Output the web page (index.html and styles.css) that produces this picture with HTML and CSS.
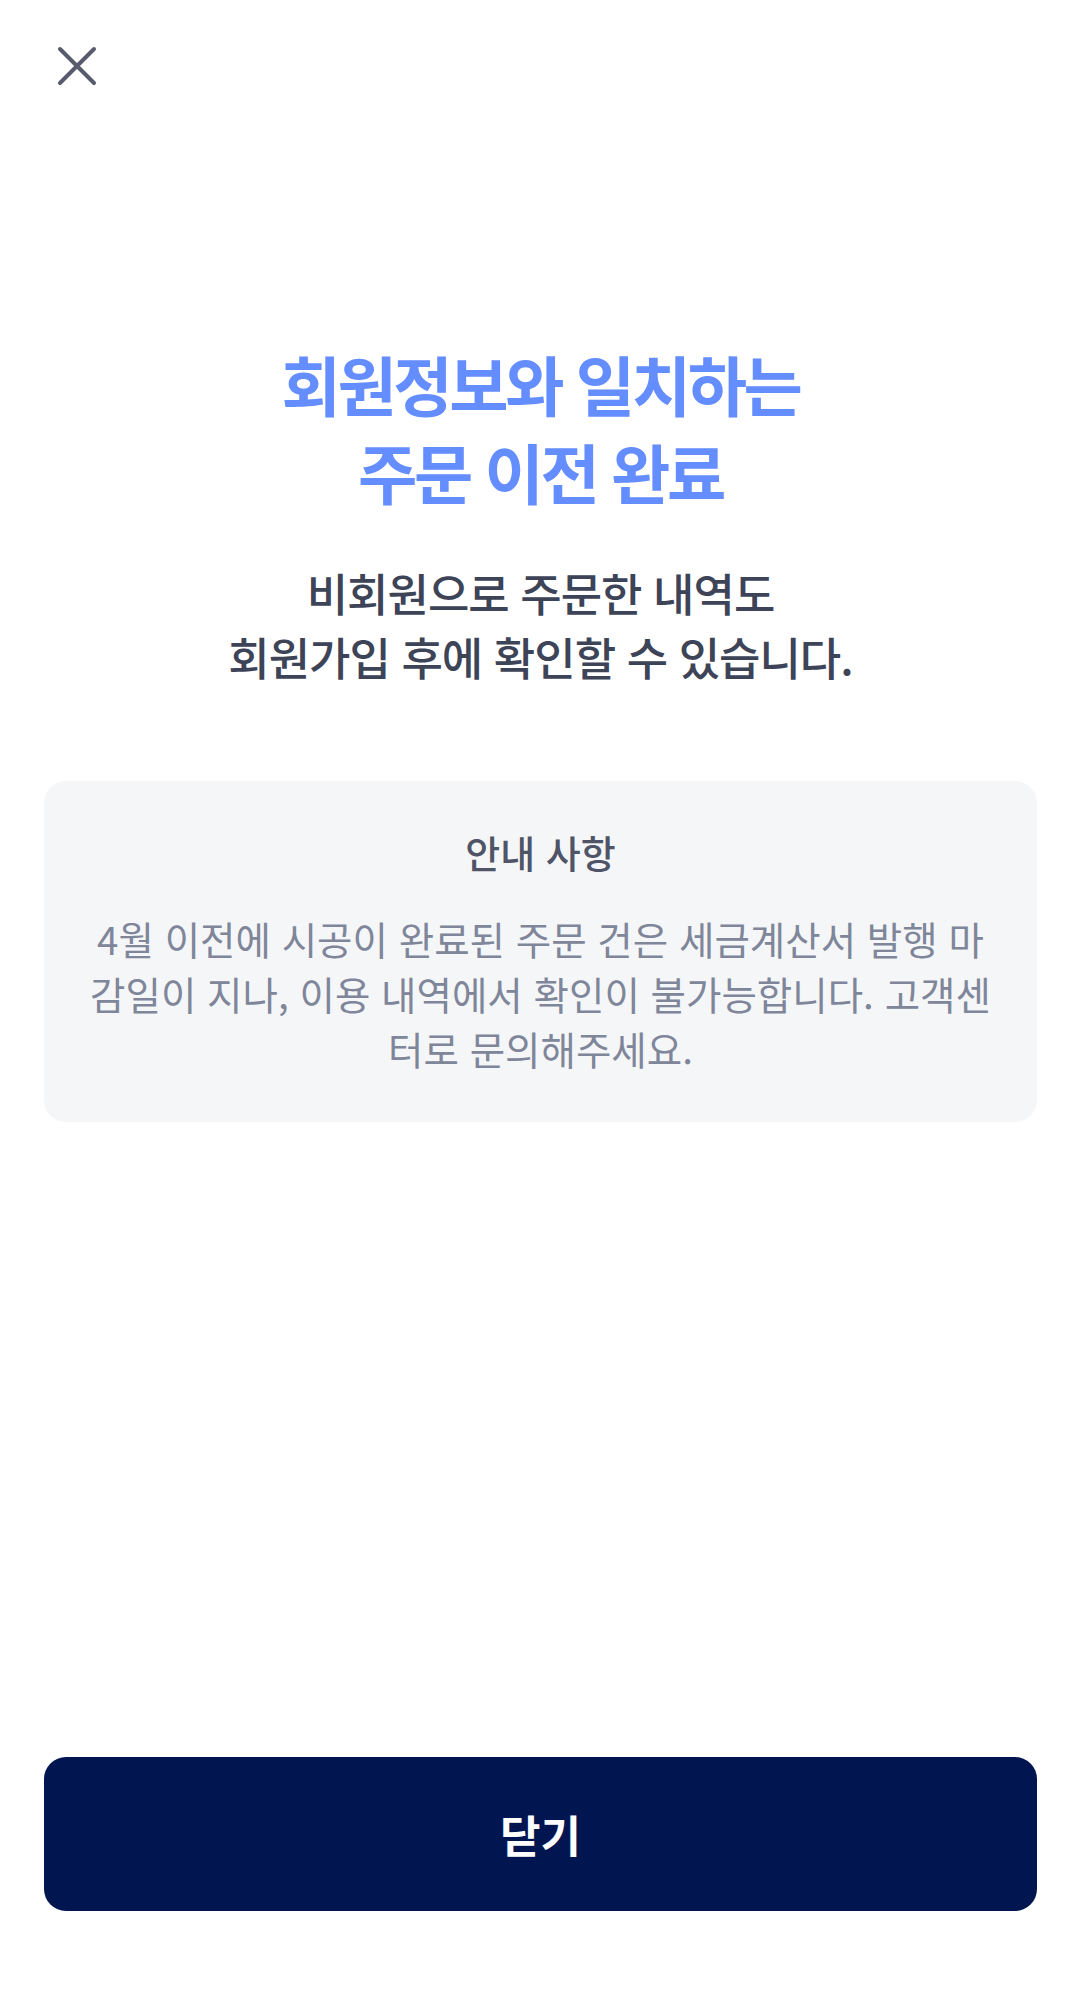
FILE: index.html
```html
<!DOCTYPE html>
<html lang="ko">
<head>
    <meta charset="UTF-8">
    <meta name="viewport" content="width=device-width, initial-scale=1.0">
    <title>주문 이전 완료</title>
    <link rel="stylesheet" href="styles.css">
</head>
<body>

    <div class="page">
        <!-- Close -->
        <header class="top-bar">
            <button class="close-btn" type="button" aria-label="닫기">
                <svg width="40" height="40" viewBox="0 0 40 40" fill="none">
                    <path d="M3 3 L37 37 M37 3 L3 37" stroke="#575b6d" stroke-width="4" stroke-linecap="round"/>
                </svg>
            </button>
        </header>

        <main class="content">
            <h1 class="title">회원정보와 일치하는<br>주문 이전 완료</h1>
            <p class="desc">비회원으로 주문한 내역도<br>회원가입 후에 확인할 수 있습니다.</p>

            <!-- Notice box -->
            <section class="notice">
                <h2 class="notice-title">안내 사항</h2>
                <p class="notice-text">4월 이전에 시공이 완료된 주문 건은 세금계산서 발행 마감일이 지나, 이용 내역에서 확인이 불가능합니다. 고객센터로 문의해주세요.</p>
            </section>
        </main>

        <footer class="bottom">
            <button class="confirm-btn" type="button">닫기</button>
        </footer>
    </div>

</body>
</html>
```

FILE: styles.css
```css
body {
    margin: 0;
    background: #ffffff;
    font-family: "Noto Sans CJK KR", "Noto Sans", sans-serif;
}
.page {
    min-height: 100vh;
    display: flex;
    flex-direction: column;
}
.top-bar {
    padding: 46px 0 0 57px;
}
.close-btn {
    display: block;
    padding: 0;
    border: none;
    background: none;
    cursor: pointer;
}
.close-btn svg {
    display: block;
}
.content {
    flex: 1;
    padding: 0 44px;
    text-align: center;
}
.title {
    margin: 253px 0 0;
    font-size: 64.5px;
    line-height: 88px;
    font-weight: 700;
    letter-spacing: -3.4px;
    color: #648dff;
}
.desc {
    margin: 46px 0 0;
    font-size: 45px;
    line-height: 64px;
    font-weight: 500;
    letter-spacing: -1px;
    color: #3d4457;
}
.notice {
    margin-top: 92px;
    padding: 46px 39px;
    background: #f5f6f8;
    border-radius: 22px;
}
.notice-title {
    margin: 0;
    font-size: 38px;
    line-height: 50px;
    font-weight: 500;
    color: #4f5466;
}
.notice-text {
    margin: 34px 0 0;
    font-size: 38.5px;
    line-height: 55px;
    font-weight: 400;
    color: #80869a;
}
.bottom {
    padding: 0 44px 88px;
}
.confirm-btn {
    display: block;
    width: 100%;
    height: 154px;
    border: none;
    border-radius: 22px;
    background: #011650;
    color: #ffffff;
    font-family: inherit;
    font-size: 44px;
    font-weight: 700;
    cursor: pointer;
}
```
